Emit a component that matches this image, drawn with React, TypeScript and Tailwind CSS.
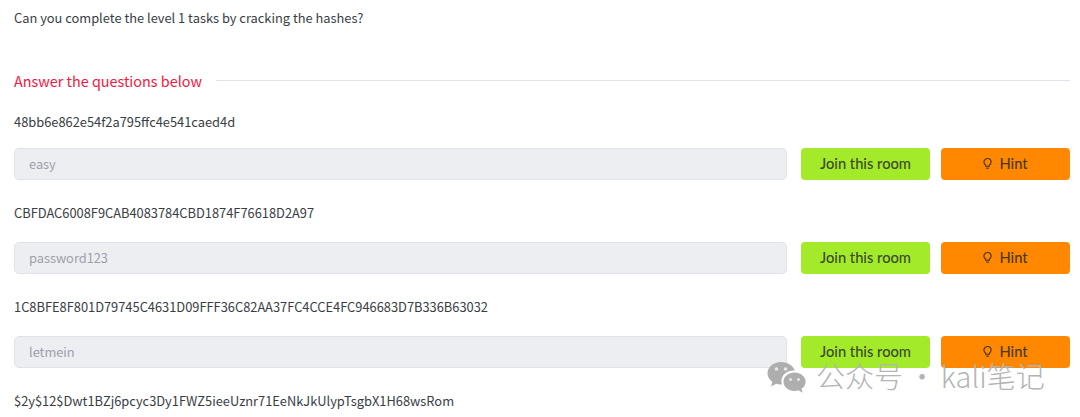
const F = '[font-family:"Noto_Sans_CJK_SC",sans-serif]';

function Row({ q, a, first }: { q: string; a: string; first?: boolean }) {
  return (
    <div className="flex flex-col">
      <p className={`text-[12.85px] leading-[20px] text-[#3a3d42] ${first ? "mb-[15.5px]" : "mb-[19px]"}`}>{q}</p>
      <div className="flex h-[32px] mb-[23px]">
        <div className="flex-1 bg-[#eceef2] border border-[#dfe2e8] rounded-[5px] flex items-center pl-[14px] text-[12.8px] text-[#9ca0aa]">
          {a}
        </div>
        <button className="ml-[14px] w-[129px] bg-[#a3ea2a] rounded-[4px] text-[14.7px] text-[#3c4a2a] [font-family:Lato,sans-serif] font-medium">
          Join this room
        </button>
        <button className="ml-[11px] w-[129px] bg-[#ff8800] rounded-[4px] text-[14.7px] text-[#4a3a20] [font-family:Lato,sans-serif] font-medium flex items-center justify-center gap-[7px]">
          <svg width="9" height="13" viewBox="0 0 10 13" fill="none" stroke="#3d3020" strokeWidth="1.2">
            <path d="M3 8.500C1.800 7.600 1 6.500 1 4.900 1 2.700 2.800 1 5 1s4 1.700 4 3.900c0 1.600-.8 2.700-2 3.600V9.500H3z" />
            <path d="M3.500 11.700h3" />
          </svg>
          Hint
        </button>
      </div>
    </div>
  );
}

export default function App() {
  return (
    <div className={`relative w-[1080px] h-[417px] overflow-hidden bg-white pl-[14px] pr-[10px] pt-[8px] ${F}`}>
      <p className="text-[12.85px] leading-[20px] text-[#3a3d42]">Can you complete the level 1 tasks by cracking the hashes?</p>
      <div className="flex items-center mt-[41px] mb-[19px]">
        <span className="text-[14.4px] leading-[24px] text-[#f5173f]">Answer the questions below</span>
        <div className="flex-1 h-px bg-[#e0e3e9] ml-[14px] mb-[2px]" />
      </div>
      <Row first q="48bb6e862e54f2a795ffc4e541caed4d" a="easy" />
      <Row q="CBFDAC6008F9CAB4083784CBD1874F76618D2A97" a="password123" />
      <Row q="1C8BFE8F801D79745C4631D09FFF36C82AA37FC4CCE4FC946683D7B336B63032" a="letmein" />
      <p className="text-[12.85px] leading-[20px] text-[#3a3d42]">$2y$12$Dwt1BZj6pcyc3Dy1FWZ5ieeUznr71EeNkJkUlypTsgbX1H68wsRom</p>

      <div className="absolute left-[767px] top-[357px] flex items-center">
        <svg width="40" height="34" viewBox="0 0 40 34" fill="#aaaaaa" fillOpacity="0.95">
          <path d="M14 1C6.500 1 0.500 6 0.500 12.300c0 3.500 1.900 6.500 4.800 8.600L4 25.500l5.200-2.700c1.500.5 3.100.8 4.800.8h1c-.4-1.100-.6-2.200-.6-3.400 0-6 5.600-10.600 12.400-10.600h.9C26.500 4.600 20.800 1 14 1z" />
          <path d="M27.500 11.500c-6 0-11 4.100-11 9.200s5 9.200 11 9.200c1.300 0 2.600-.2 3.800-.6l4.300 2.400-1.100-3.900c2.500-1.700 4.100-4.200 4.100-7.100 0-5.100-5-9.200-11.100-9.200z" />
          <circle cx="9.500" cy="8" r="1.800" fill="#fff" fillOpacity="0.7" />
          <circle cx="18.500" cy="8" r="1.800" fill="#fff" fillOpacity="0.7" />
          <circle cx="23.500" cy="18.500" r="1.500" fill="#fff" fillOpacity="0.7" />
          <circle cx="31.500" cy="18.500" r="1.500" fill="#fff" fillOpacity="0.7" />
        </svg>
        <span className="ml-[9px] mb-[5px] text-[29px] leading-[36px] text-[#b4b4b4] font-light whitespace-nowrap [word-spacing:-2px]">公众号 · kali笔记</span>
      </div>
    </div>
  );
}
